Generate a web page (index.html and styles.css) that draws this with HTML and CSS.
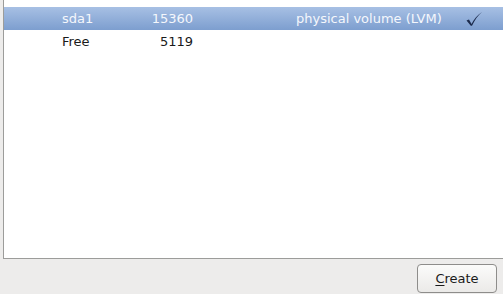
FILE: index.html
```html
<!DOCTYPE html>
<html>
<head>
<meta charset="utf-8">
<link rel="stylesheet" href="styles.css">
</head>
<body>
<div class="window">
  <div class="panel">
    <div class="list">
      <div class="row selected">
        <span class="name">sda1</span>
        <span class="size">15360</span>
        <span class="type">physical volume (LVM)</span>
        <span class="check">
          <svg width="18" height="16" viewBox="0 0 18 16"><path d="M1.5 9.5 L4 8.5 L6.5 13 C9 8 12.5 4 17 1 C13 4.5 10 8.5 7 14.8 L5.8 14.8 Z" fill="#1c2b4c"/></svg>
        </span>
      </div>
      <div class="row">
        <span class="name">Free</span>
        <span class="size">5119</span>
        <span class="type"></span>
        <span class="check"></span>
      </div>
    </div>
  </div>
  <div class="actions">
    <button class="btn"><u>C</u>reate</button>
  </div>
</div>
</body>
</html>
```
FILE: styles.css
```css
html, body {
  margin: 0;
  padding: 0;
  background: #edeceb;
  font-family: "DejaVu Sans", sans-serif;
  font-size: 13px;
}
.window {
  width: 503px;
  height: 294px;
  display: flex;
  flex-direction: column;
}
.panel {
  margin-left: 3px;
  height: 259px;
  background: #ffffff;
  border-left: 1px solid #9c9c9a;
  border-bottom: 1px solid #9c9c9a;
  box-sizing: border-box;
  padding-top: 7px;
}
.row {
  display: grid;
  grid-template-columns: 58px 60px 71px 103px 169px 1fr;
  height: 23px;
  align-items: center;
  color: #1a1a1a;
}
.row.selected {
  background: linear-gradient(#a7c0e4, #7d9ecf);
  color: #f4f7fc;
}
.name { grid-column: 2; }
.size { grid-column: 3; text-align: right; }
.type { grid-column: 5; }
.check { grid-column: 6; display: flex; align-items: center; }
.actions {
  display: flex;
  justify-content: flex-end;
  padding: 5px 6px 0 0;
}
.btn {
  width: 80px;
  height: 29px;
  border: 1px solid #8e8d8b;
  border-radius: 4px;
  background: linear-gradient(#fbfbfa, #ebeae8);
  font-family: "DejaVu Sans", sans-serif;
  font-size: 13px;
  color: #1a1a1a;
  padding: 0;
}
.btn u {
  text-decoration-thickness: 1px;
  text-underline-offset: 2px;
}
```
